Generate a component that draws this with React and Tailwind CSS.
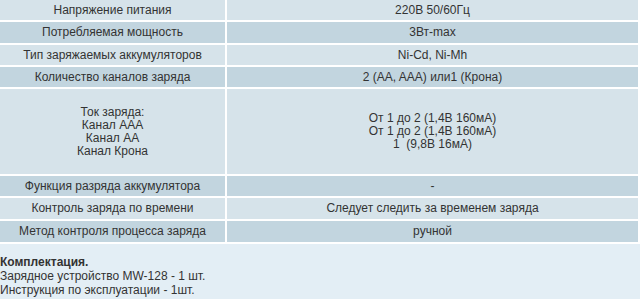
export default function App() {
  const rows = [
    { h: "h-[20px]", dark: false, l: ["Напряжение питания"], r: ["220В 50/60Гц"] },
    { h: "h-[21px]", dark: true, l: ["Потребляемая мощность"], r: ["3Вт-max"] },
    { h: "h-[20px]", dark: false, l: ["Тип заряжаемых аккумуляторов"], r: ["Ni-Cd, Ni-Mh"] },
    { h: "h-[20px]", dark: true, l: ["Количество каналов заряда"], r: ["2 (AA, AAA) или1 (Крона)"] },
    {
      h: "h-[85px]",
      dark: false,
      l: ["Ток заряда:", "Канал AAA", "Канал AA", "Канал Крона"],
      r: ["От 1 до 2 (1,4В 160мА)", "От 1 до 2 (1,4В 160мА)", "1  (9,8В 16мА)"],
    },
    { h: "h-[20px]", dark: true, l: ["Функция разряда аккумулятора"], r: ["-"] },
    { h: "h-[21px]", dark: false, l: ["Контроль заряда по времени"], r: ["Следует следить за временем заряда"] },
    { h: "h-[21px]", dark: true, l: ["Метод контроля процесса заряда"], r: ["ручной"] },
  ];

  const cell = (lines, dark, h) => (
    <div
      className={`${h} ${dark ? "bg-[#c2d5df]" : "bg-[#d6e3ea]"} flex flex-col items-center justify-center text-center whitespace-pre`}
    >
      {lines.map((t, i) => (
        <div key={i}>{t}</div>
      ))}
    </div>
  );

  return (
    <div className="w-[640px] h-[299px] overflow-hidden bg-[#e3eef5] font-['Liberation_Sans',Arial,sans-serif] text-[12px] leading-[13px] text-[#333333]">
      <div className="grid grid-cols-[225px_411px] gap-[2px] pr-[2px] pb-[2px] bg-white">
        {rows.map((row, i) => (
          <div key={i} className="contents">
            {cell(row.l, row.dark, row.h)}
            {cell(row.r, row.dark, row.h)}
          </div>
        ))}
      </div>
      <div className="pt-[11px] leading-[14px]">
        <div className="font-bold">Комплектация.</div>
        <div>Зарядное устройство MW-128 - 1 шт.</div>
        <div>Инструкция по эксплуатации - 1шт.</div>
      </div>
    </div>
  );
}
